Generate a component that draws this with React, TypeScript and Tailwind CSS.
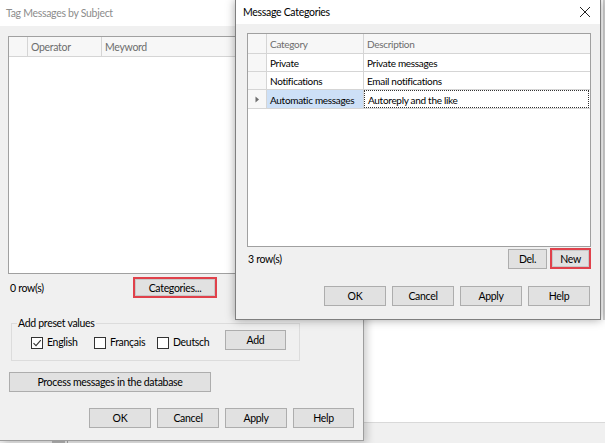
import React from "react";

function Btn({
  children,
  w,
  red,
  className = "",
}: {
  children: React.ReactNode;
  w: string;
  red?: boolean;
  className?: string;
}) {
  if (red) {
    return (
      <div className={`${w} h-[21px] border-2 border-[#e0414b] p-0 ${className}`}>
        <div className="w-full h-full bg-[#e1e1e1] border border-[#c8c8c8] flex items-center justify-center pt-[1px] text-black">
          {children}
        </div>
      </div>
    );
  }
  return (
    <div
      className={`${w} h-[20px] bg-[#e1e1e1] border border-[#adadad] flex items-center justify-center pt-[1px] text-black ${className}`}
    >
      {children}
    </div>
  );
}

function Check({ checked, label, w }: { checked?: boolean; label: string; w: string }) {
  return (
    <div className={`flex items-center ${w}`}>
      <div className="w-[12px] h-[12px] border border-[#333] bg-white flex items-center justify-center">
        {checked && (
          <svg width="10" height="10" viewBox="0 0 10 10">
            <path d="M1.5 5.2 L4 7.6 L8.8 2.2" fill="none" stroke="#333" strokeWidth="1.1" />
          </svg>
        )}
      </div>
      <span className="ml-[4px] text-black">{label}</span>
    </div>
  );
}

export default function App() {
  return (
    <div className="relative w-[605px] h-[443px] overflow-hidden bg-white font-[family-name:Lato,sans-serif] text-[10.5px] leading-none tracking-[-0.3px]">
      {/* background app strip */}
      <div className="absolute left-0 right-0 bottom-0 h-[21px] bg-[#f0f0f0] border-t border-[#d9d9d9]">
        <div className="absolute left-[52px] top-[16px] w-[13px] h-[5px] bg-[#b9b9b9]" />
        <div className="absolute left-[67px] top-[16px] w-[1px] h-[5px] bg-[#a9a9a9]" />
      </div>
      <div className="absolute right-0 top-0 w-[2px] h-[320px] bg-[#cfcfcf]" />

      {/* Back window */}
      <div className="absolute left-0 top-0 w-[364px] h-[441px] bg-[#f0f0f0] border-r border-b border-[#9d9d9d] shadow-[3px_3px_8px_rgba(0,0,0,0.2)]">
        <div className="h-[26px] bg-white pl-[6px] pt-[1px] flex items-center text-[10.5px] text-[#8c8c8c]">
          Tag Messages by Subject
        </div>
        <div className="ml-[8px] mt-[10px] w-[348px] h-[238px] border border-[#a0a0a0] bg-white">
          <div className="flex h-[20px] border-b border-[#d5d5d5] bg-[#f7f7f7] text-[#6d6d6d]">
            <div className="w-[19px] border-r border-[#d5d5d5]" />
            <div className="w-[74px] border-r border-[#d5d5d5] flex items-center pl-[3px] pt-[1px]">Operator</div>
            <div className="w-[200px] border-r border-[#d5d5d5] flex items-center pl-[3px] pt-[1px]">Meyword</div>
          </div>
        </div>
        <div className="flex items-center h-[21px] mt-[3px]">
          <span className="ml-[10px] w-[123px] text-black pt-[1px]">0 row(s)</span>
          <Btn w="w-[84px]" red>
            Categories...
          </Btn>
        </div>
        <div className="relative ml-[11px] mt-[25px] w-[289px] h-[38px] border border-[#dcdcdc]">
          <span className="absolute left-[5px] top-[-6px] bg-[#f0f0f0] px-[1px] text-black">
            Add preset values
          </span>
          <div className="flex items-center pl-[19px] pt-[11px]">
            <Check checked label="English" w="w-[63px]" />
            <Check label="Français" w="w-[63px]" />
            <Check label="Deutsch" w="w-[68px]" />
            <Btn w="w-[61px]" className="mt-[-5px]">
              Add
            </Btn>
          </div>
        </div>
        <div className="ml-[9px] mt-[11px]">
          <Btn w="w-[202px]">Process messages in the database</Btn>
        </div>
        <div className="flex gap-[6px] ml-[89px] mt-[16px]">
          <Btn w="w-[62px]">OK</Btn>
          <Btn w="w-[62px]">Cancel</Btn>
          <Btn w="w-[62px]">Apply</Btn>
          <Btn w="w-[61px]">Help</Btn>
        </div>
      </div>

      {/* Front dialog */}
      <div className="absolute left-[235px] top-0 w-[366px] h-[320px] bg-[#f0f0f0] border-l border-r border-b border-[#7f7f7f] shadow-[0_0_9px_rgba(0,0,0,0.35)]">
        <div className="h-[24px] bg-white flex items-center justify-between pl-[7px] pr-[9px]">
          <span className="text-[10.5px] text-black pt-[1px]">Message Categories</span>
          <svg width="12" height="12" viewBox="0 0 12 12">
            <path d="M1 1 L11 11 M11 1 L1 11" stroke="#222" strokeWidth="1" fill="none" />
          </svg>
        </div>
        <div className="ml-[11px] mt-[9px] w-[344px] h-[214px] border border-[#a0a0a0] bg-white text-[10px]">
          <div className="flex h-[20px] border-b border-[#d5d5d5] bg-[#f7f7f7] text-[#6d6d6d]">
            <div className="w-[19px] border-r border-[#d5d5d5]" />
            <div className="w-[97px] border-r border-[#d5d5d5] flex items-center pl-[3px] pt-[1px]">Category</div>
            <div className="flex-1 flex items-center pl-[3px] pt-[1px]">Description</div>
          </div>
          {[
            ["Private", "Private messages"],
            ["Notifications", "Email notifications"],
          ].map(([a, b]) => (
            <div key={a} className="flex h-[18px] border-b border-[#d5d5d5] text-black">
              <div className="w-[19px] border-r border-[#d5d5d5] bg-[#f7f7f7]" />
              <div className="w-[97px] border-r border-[#d5d5d5] flex items-center pl-[3px] pt-[1px]">{a}</div>
              <div className="flex-1 flex items-center pl-[3px] pt-[1px]">{b}</div>
            </div>
          ))}
          <div className="flex h-[19px] border-b border-[#d5d5d5] text-black">
            <div className="w-[19px] border-r border-[#d5d5d5] bg-[#f7f7f7] flex items-center justify-center">
              <svg width="5" height="7" viewBox="0 0 5 7">
                <path d="M0.5 0.5 L4 3.5 L0.5 6.5 Z" fill="#6d6d6d" />
              </svg>
            </div>
            <div className="w-[97px] border-r border-[#d5d5d5] bg-[#cde0f7] flex items-center pl-[3px] pt-[1px] whitespace-nowrap">
              Automatic messages
            </div>
            <div className="flex-1 flex items-center pl-[3px] pt-[1px] border border-dotted border-[#333] mr-[1px]">
              Autoreply and the like
            </div>
          </div>
        </div>
        <div className="flex items-center h-[21px] mt-[1px] ml-[12px] mr-[9px]">
          <span className="flex-1 text-black pt-[1px]">3 row(s)</span>
          <Btn w="w-[39px]" className="mr-[3px]">
            Del.
          </Btn>
          <Btn w="w-[41px]" red>
            New
          </Btn>
        </div>
        <div className="flex justify-end gap-[6px] mr-[10px] mt-[17px]">
          <Btn w="w-[62px]">OK</Btn>
          <Btn w="w-[62px]">Cancel</Btn>
          <Btn w="w-[62px]">Apply</Btn>
          <Btn w="w-[62px]">Help</Btn>
        </div>
      </div>
    </div>
  );
}
